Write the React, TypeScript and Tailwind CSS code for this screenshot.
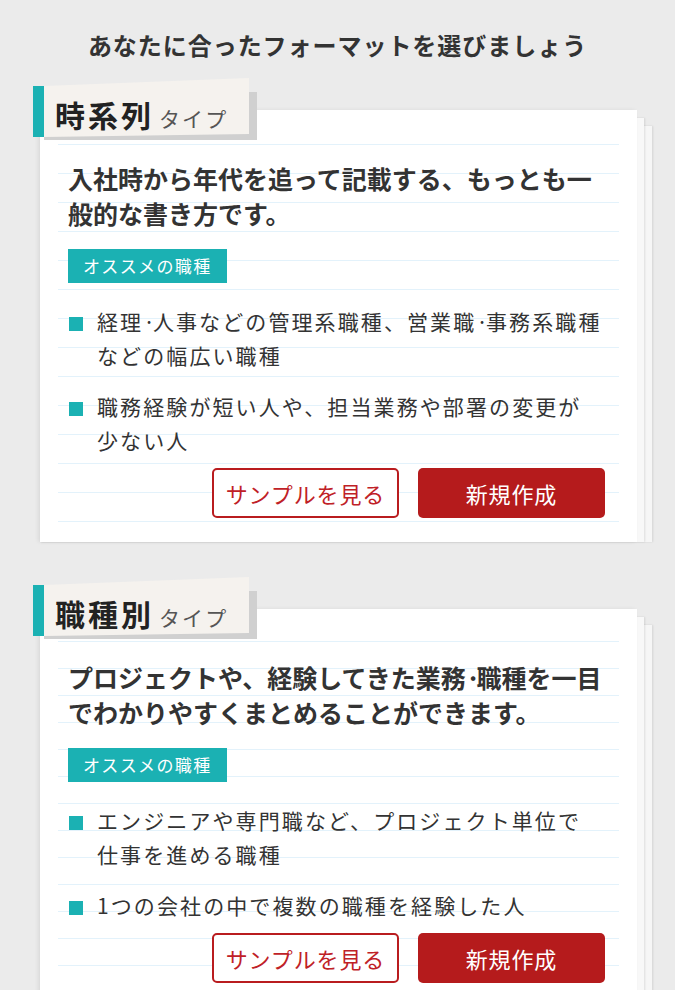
import React from 'react';

interface FormatCard {
  name: string;
  lead: string[];
  items: string[][];
  lines: string; // ruled-paper background, one class per card
}

const cards: FormatCard[] = [
  {
    name: '時系列',
    lead: ['入社時から年代を追って記載する、もっとも一', '般的な書き方です。'],
    items: [
      ['経理·人事などの管理系職種、営業職·事務系職種', 'などの幅広い職種'],
      ['職務経験が短い人や、担当業務や部署の変更が', '少ない人'],
    ],
    lines:
      'bg-[image:repeating-linear-gradient(to_bottom,transparent_0px,transparent_28px,#e3f2fb_28px,#e3f2fb_29px)]',
  },
  {
    name: '職種別',
    lead: ['プロジェクトや、経験してきた業務·職種を一目', 'でわかりやすくまとめることができます。'],
    items: [
      ['エンジニアや専門職など、プロジェクト単位で', '仕事を進める職種'],
      ['1つの会社の中で複数の職種を経験した人'],
    ],
    lines:
      'bg-[image:repeating-linear-gradient(to_bottom,transparent_0px,transparent_26px,#e3f2fb_26px,#e3f2fb_27px)]',
  },
];

// the middle dot comes out too wide in the CJK font, so tighten it
function withDots(text: string, dotClass: string) {
  const parts = text.split('·');
  return parts.map((p, i) => (
    <React.Fragment key={i}>
      {p}
      {i < parts.length - 1 && <span className={dotClass}>·</span>}
    </React.Fragment>
  ));
}

function TypeTab({ name }: { name: string }) {
  return (
    <div className="relative z-10 ml-[33px] h-[62px] w-[224px]">
      {/* shadow + slanted paper label */}
      <div className="absolute left-[11px] top-[14px] h-[48px] w-[213px] bg-[#d0d0d0]" />
      <div className="absolute left-[11px] top-0 h-[59px] w-[205px] bg-[#f5f2ee] [clip-path:polygon(0_8px,100%_0,100%_56px,0_100%)]" />
      <div className="absolute left-0 top-[8px] h-[51px] w-[11px] bg-[#1bb1b3]" />
      <div className="relative flex items-baseline pl-[22px] pt-[16px]">
        <span className="text-[30px] font-bold leading-[40px] tracking-[0.1em] text-[#222]">{name}</span>
        <span className="ml-[5px] text-[21px] leading-[40px] tracking-[0.1em] text-[#555]">タイプ</span>
      </div>
    </div>
  );
}

function Card({ card }: { card: FormatCard }) {
  return (
    <section className="mt-[16px] first:mt-[17px] [&+section]:mt-[35px]">
      <TypeTab name={card.name} />
      <div className="relative -mt-[30px] ml-[40px] w-[597px]">
        {/* stacked sheets behind */}
        <div className="absolute bottom-0 left-0 right-[-15px] top-[16px] bg-[#f6f6f6] shadow-[1px_0_2px_rgba(0,0,0,0.1)]" />
        <div className="absolute bottom-0 left-0 right-[-7px] top-[8px] bg-[#f8f8f8] shadow-[1px_0_2px_rgba(0,0,0,0.1)]" />

        <div className="relative bg-white pb-[24px] pl-[28px] pr-[32px] pt-[51px] shadow-[-2px_0_4px_rgba(0,0,0,0.07)]">
          <div className={`absolute bottom-[20px] left-[18px] right-[18px] top-[6px] ${card.lines}`} />

          <div className="relative">
            <p className="text-[25px] font-bold leading-[35px] text-[#333]">
              {card.lead.map((l, i) => (
                <span key={i} className="block whitespace-nowrap">
                  {withDots(l, 'tracking-[-0.16em]')}
                </span>
              ))}
            </p>

            <span className="mt-[18px] inline-block bg-[#1bb1b3] px-[15px] text-[17px] leading-[34px] tracking-[0.08em] text-white">
              オススメの職種
            </span>

            <ul className="mt-[21px] flex flex-col gap-[17px]">
              {card.items.map((item, i) => (
                <li key={i} className="flex">
                  <span className="ml-[1px] mt-[13px] h-[14px] w-[14px] shrink-0 bg-[#1bb1b3]" />
                  <span className="ml-[14px] text-[21px] leading-[34px] tracking-[0.1em] text-[#333]">
                    {item.map((l, j) => (
                      <span key={j} className="block whitespace-nowrap">
                        {withDots(l, 'tracking-[-0.1em]')}
                      </span>
                    ))}
                  </span>
                </li>
              ))}
            </ul>

            <div className="mt-[11px] flex justify-end gap-[19px]">
              <button className="h-[50px] w-[187px] rounded-[5px] border-2 border-[#b91c1f] bg-white text-[22px] tracking-[0.04em] text-[#bf2127]">
                サンプルを見る
              </button>
              <button className="h-[50px] w-[187px] rounded-[5px] bg-[#b51b1c] text-[22px] tracking-[0.04em] text-white">
                新規作成
              </button>
            </div>
          </div>
        </div>
      </div>
    </section>
  );
}

export default function App() {
  return (
    <div className="min-h-screen overflow-hidden bg-[#ebebeb] pb-[40px] pt-[28px] font-['Noto_Sans_CJK_JP','Noto_Sans',sans-serif]">
      <h1 className="text-center text-[24px] font-bold leading-[34px] tracking-[0.04em] text-[#333]">
        あなたに合ったフォーマットを選びましょう
      </h1>
      {cards.map(card => (
        <Card key={card.name} card={card} />
      ))}
    </div>
  );
}
